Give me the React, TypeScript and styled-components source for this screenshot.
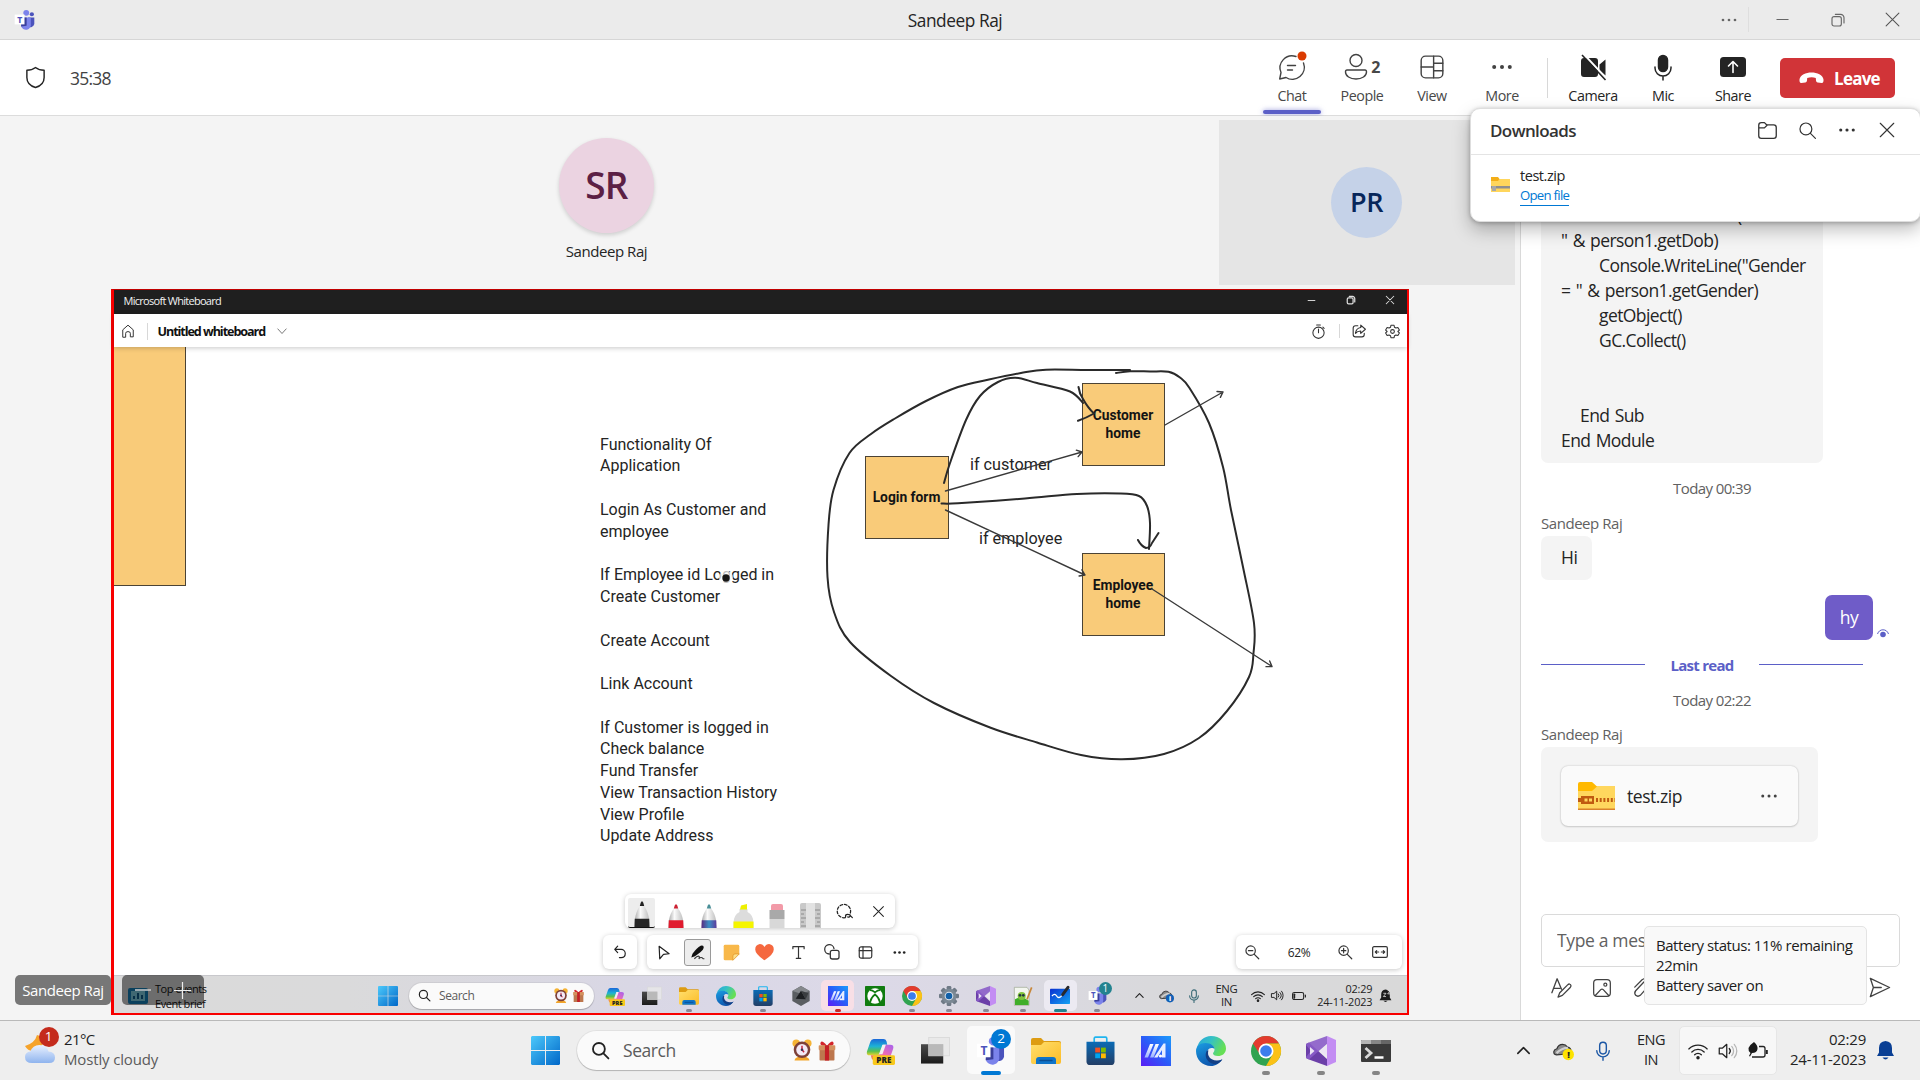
import React from 'react';
import styled, { createGlobalStyle, css } from 'styled-components';

const ui = '"Open Sans", "Noto Sans", sans-serif';
const board = 'Roboto, "Liberation Sans", sans-serif';

const GlobalStyle = createGlobalStyle`
  * { box-sizing: border-box; }
  body { margin: 0; background: #f4f4f4; overflow: hidden; }
  svg { display: block; flex: none; overflow: visible; }
`;

/* ---------- shared ---------- */

const Screen = styled.div`
  position: relative;
  width: 1920px;
  height: 1080px;
  overflow: hidden;
  display: flex;
  flex-direction: column;
  background: #f4f4f4;
  color: #242424;
  font-family: ${ui};
  font-size: 15px;
  letter-spacing: -0.03em;
  white-space: nowrap;
`;

const Cell = styled.div<{ $w: number }>`
  position: relative;
  width: ${p => p.$w}px;
  height: 100%;
  flex: none;
  display: flex;
  align-items: center;
  justify-content: center;
`;

const Rule = styled.i<{ $h: number; $m?: string; $c?: string }>`
  width: 1px;
  height: ${p => p.$h}px;
  margin: ${p => p.$m ?? '0'};
  background: ${p => p.$c ?? '#d8d8d8'};
  flex: none;
`;

const Spacer = styled.span`
  flex: 1;
`;

type IconProps = { s?: number; c?: string; w?: number };
const Line = ({ s = 20, c = '#424242', w = 1.4, children }: IconProps & { children: React.ReactNode }) => (
  <svg width={s} height={s} viewBox="0 0 24 24" fill="none" stroke={c} strokeWidth={w} strokeLinecap="round" strokeLinejoin="round">
    {children}
  </svg>
);

const Dots = ({ c = '#424242', gap = 6.5, r = 1.4, ...p }: IconProps & { gap?: number; r?: number }) => (
  <Line {...p} c="none"><g fill={c}><circle cx={12 - gap} cy="12" r={r} /><circle cx="12" cy="12" r={r} /><circle cx={12 + gap} cy="12" r={r} /></g></Line>
);
const Minus = (p: IconProps) => <Line {...p}><path d="M3 12h18" /></Line>;
const Cross = (p: IconProps) => <Line {...p}><path d="M3 3l18 18M21 3L3 21" /></Line>;
const Restore = (p: IconProps) => <Line {...p}><rect x="3" y="7" width="14" height="14" rx="3" /><path d="M8 3.5h8a5 5 0 0 1 5 5v8" /></Line>;
const Search = (p: IconProps) => <Line {...p}><circle cx="10" cy="10" r="7.5" /><path d="M15.7 15.7L22 22" /></Line>;
const ChevronUp = (p: IconProps) => <Line {...p}><path d="M4 16l8-8 8 8" /></Line>;
const Mic = (p: IconProps) => <Line {...p}><rect x="8" y="1.5" width="8" height="14" rx="4" /><path d="M4.5 11.5a7.5 7.5 0 0 0 15 0M12 19v4" /></Line>;
const Wifi = (p: IconProps) => <Line {...p}><path d="M1 9.5a15.5 15.5 0 0 1 22 0M4.6 13.2a10.5 10.5 0 0 1 14.8 0M8 16.6a5.6 5.6 0 0 1 8 0" /><circle cx="12" cy="20" r="1.3" fill={p.c} /></Line>;
const Volume = ({ dim, ...p }: IconProps & { dim?: string }) => (
  <Line {...p}><path d="M1.5 8.5h4l5-4.5v16l-5-4.5h-4z" /><path d="M13.5 9a4.5 4.5 0 0 1 0 6" /><path d="M16.5 6.5a8 8 0 0 1 0 11M19.5 4a12 12 0 0 1 0 16" stroke={dim ?? p.c} /></Line>
);

const TeamsLogo = ({ s = 30 }: IconProps) => (
  <svg width={s} height={s} viewBox="0 0 30 30">
    <circle cx="25.5" cy="7.5" r="3" fill="#4b53bc" />
    <circle cx="17.5" cy="5.5" r="4.2" fill="#7b83eb" />
    <path d="M20 12h9v9.500a5.500 5.500 0 0 1-9 3z" fill="#4b53bc" />
    <path d="M10 12h14v9a7 7 0 0 1-14 3z" fill="#7b83eb" />
    <path d="M12 12h6v12l-8 1z" fill="#3a3f9b" />
    <rect x="1" y="8" width="14" height="14" fill="#fff" />
    <text x="8" y="19.5" textAnchor="middle" fontFamily="Open Sans" fontWeight="700" fontSize="12.5" fill="#4b53bc">T</text>
  </svg>
);

/* ---------- taskbar artwork ---------- */

const WindowsLogo = ({ s = 30 }: IconProps) => (
  <svg width={s} height={s} viewBox="0 0 30 30">
    <defs><linearGradient id="win" gradientUnits="userSpaceOnUse" x1="0" y1="0" x2="30" y2="30"><stop offset="0" stopColor="#4cc9fb" /><stop offset="1" stopColor="#0067c8" /></linearGradient></defs>
    <path fill="url(#win)" d="M1 0h13.500v14.500H0V1zM15.500 0H29l1 1v13.500H15.500zM0 15.500h14.500V30H1l-1-1zM15.500 15.500H30V29l-1 1H15.500z" />
  </svg>
);
const CopilotIcon = ({ s = 30 }: IconProps) => (
  <svg width={s} height={s} viewBox="0 0 30 30">
    <defs>
      <linearGradient id="cpa" x1="0" y1="0" x2="0" y2="1"><stop offset="0" stopColor="#1a66d8" /><stop offset=".45" stopColor="#1cb2d6" /><stop offset=".75" stopColor="#58c04e" /><stop offset="1" stopColor="#e9d22e" /></linearGradient>
      <linearGradient id="cpb" x1="1" y1="0" x2="0" y2="1"><stop offset="0" stopColor="#a562ef" /><stop offset=".5" stopColor="#ee6bb5" /><stop offset="1" stopColor="#f7862f" /></linearGradient>
    </defs>
    <path fill="url(#cpa)" d="M8 3h10q2.500 0 3.200 2.500L22 9h-5l-4 11H4q-4 0-3-4L4.500 6Q5.500 3 8 3z" />
    <path fill="url(#cpb)" d="M19 9h6q4.500 0 3 4.500l-3 8.500Q24 25 21 25H9q-3 0-3.500-3L5 20h6q3 0 4-3z" />
    <path d="M17.500 9h3l-3.500 10h-3z" fill="#f2f2f2" />
    <rect x="7" y="20" width="23" height="10" rx="1.5" fill="#f8c81c" />
    <text x="18.5" y="28" textAnchor="middle" fontFamily="Open Sans" fontWeight="800" fontSize="8.3" letterSpacing="0.2" fill="#222">PRE</text>
  </svg>
);
const TaskViewIcon = ({ s = 30 }: IconProps) => (
  <svg width={s} height={s} viewBox="0 0 30 30">
    <defs><linearGradient id="tvb" x1="0" y1="0" x2="0" y2="1"><stop offset="0" stopColor="#4a4a4a" /><stop offset="1" stopColor="#1c1c1c" /></linearGradient></defs>
    <rect x="0" y="8.5" width="23" height="20" fill="url(#tvb)" />
    <rect x="8" y="1.5" width="21.5" height="19" fill="#e8e8e8" fillOpacity=".82" stroke="#d6d6d6" strokeWidth=".8" />
    <rect x="8" y="8.5" width="15" height="12" fill="#b9b9b9" />
  </svg>
);
const FolderIcon = ({ s = 30 }: IconProps) => (
  <svg width={s} height={s} viewBox="0 0 30 30">
    <defs><linearGradient id="fld" x1="0" y1="0" x2="1" y2="1"><stop offset="0" stopColor="#ffdf6e" /><stop offset="1" stopColor="#fcbc26" /></linearGradient></defs>
    <path d="M0 4q0-2 2-2h8l3 3h15q2 0 2 2v5H0z" fill="#dd9c12" />
    <path d="M0 9h10l3-3h15q2 0 2 2v18q0 2-2 2H2q-2 0-2-2z" fill="url(#fld)" />
    <path d="M5 28v-4q0-3 3-3h14q3 0 3 3v4z" fill="#0f74c9" />
    <path d="M9 24.500h12" stroke="#0a4e93" strokeWidth="1.3" strokeLinecap="round" />
  </svg>
);
const StoreIcon = ({ s = 30 }: IconProps) => (
  <svg width={s} height={s} viewBox="0 0 30 30">
    <defs><linearGradient id="sto" x1="0" y1="0" x2="0" y2="1"><stop offset="0" stopColor="#0b6bb5" /><stop offset="1" stopColor="#233e66" /></linearGradient></defs>
    <path d="M8.500 7V2.500q0-1.300 1.300-1.300h10.400q1.300 0 1.300 1.300V7" fill="none" stroke="#20b5ef" strokeWidth="1.7" />
    <path d="M.5 6h29v20q0 4-4 4h-21q-4 0-4-4z" fill="url(#sto)" />
    <path d="M9.500 12h5v5h-5z" fill="#f25022" /><path d="M15.500 12h5v5h-5z" fill="#7fba00" /><path d="M9.500 18h5v5h-5z" fill="#00a4ef" /><path d="M15.500 18h5v5h-5z" fill="#ffb900" />
  </svg>
);
const AsusIcon = ({ s = 30 }: IconProps) => (
  <svg width={s} height={s} viewBox="0 0 30 30">
    <defs>
      <linearGradient id="asu" x1="0" y1="1" x2="1" y2="0"><stop offset="0" stopColor="#5a1cf5" /><stop offset=".5" stopColor="#2b5cf8" /><stop offset="1" stopColor="#1c9bfb" /></linearGradient>
      <linearGradient id="asl" x1="0" y1="0" x2="0" y2="1"><stop offset="0" stopColor="#fff" /><stop offset="1" stopColor="#9db4ff" /></linearGradient>
    </defs>
    <rect width="30" height="30" fill="url(#asu)" />
    <path d="M9 8h3.500L7 21.500H3.500zM14.500 8H18l-5.500 13.500H9z" fill="url(#asl)" />
    <path d="M22.500 7.500h2v14H21V14l-4.500 7.500h-3.500z" fill="#e6edff" /><circle cx="19.500" cy="20" r="1.6" fill="#fff" />
  </svg>
);
const EdgeIcon = ({ s = 30 }: IconProps) => (
  <svg width={s} height={s} viewBox="0 0 30 30">
    <defs>
      <linearGradient id="eda" x1="0" y1="0" x2="1" y2=".4"><stop offset="0" stopColor="#28a5dd" /><stop offset=".5" stopColor="#35c1c4" /><stop offset="1" stopColor="#66df55" /></linearGradient>
      <linearGradient id="edb" x1="0" y1="0" x2=".5" y2="1"><stop offset="0" stopColor="#1b9de2" /><stop offset="1" stopColor="#0d55ad" /></linearGradient>
    </defs>
    <path d="M1 12A14.500 14.500 0 0 1 15 0c9 0 15 6 15 12.500 0 5-4 7.500-8 7.500-3.500 0-5-1.500-5-2.500s1.500-1.700 1.500-4C18.500 10 15 8 11 8 6 8 2 10 1 12z" fill="url(#eda)" />
    <path d="M0 15c0-5 4-8 9.500-8 5.500 0 9 3 9 6-1-1-3.500-1.500-5-.5-2.500 1.500-3.500 5-2 8.500 2 4.500 8.500 6 14.500 2.500C23.500 27.500 19.500 30 15 30 6.500 30 0 23.500 0 15z" fill="url(#edb)" />
    <path d="M11 14.500c-3 4.500-1 11.500 6.500 13.500 4 .8 7.500-2.500 9-4.800-5 2.500-12 1.300-13.800-3.200-1-2.200-.7-4.300-.2-5.500z" fill="#123f86" />
  </svg>
);
const ChromeIcon = ({ s = 30 }: IconProps) => (
  <svg width={s} height={s} viewBox="0 0 30 30">
    <circle cx="15" cy="15" r="15" fill="#30a350" />
    <path d="M2 7.500A15 15 0 0 1 28 7.500H15L9 18.500z" fill="#e33b2e" />
    <path d="M28 7.500A15 15 0 0 1 15 30l6.500-11.500L15 7.500z" fill="#fbc116" />
    <circle cx="15" cy="15" r="7.5" fill="#fff" /><circle cx="15" cy="15" r="5.8" fill="#3b7ded" />
  </svg>
);
const VisualStudioIcon = ({ s = 30 }: IconProps) => (
  <svg width={s} height={s} viewBox="0 0 30 30">
    <path d="M0 8l3-1.500L22 24l-1 6L3 23.500 0 22z" fill="#6b3fa8" />
    <path d="M0 22l3 1.500L22 7l-1-7L3 6.500 0 8v1l5 6-5 6z" fill="#8a5cc8" opacity=".9" />
    <path d="M21 0l9 4v22l-9 4z" fill="#c38df3" />
    <path d="M4 11v8l4.500-4z" fill="#ece5f5" /><path d="M21 9.500v11L14 15z" fill="#ece5f5" />
  </svg>
);
const TerminalIcon = ({ s = 30 }: IconProps) => (
  <svg width={s} height={s} viewBox="0 0 30 30">
    <rect y="4" width="30" height="22" rx="1" fill="#3a3a3a" />
    <path d="M0 5q0-1 1-1h9v4H0z" fill="#b5b5b5" /><path d="M10 4h10v4H10z" fill="#868686" /><path d="M20 4h9q1 0 1 1v3H20z" fill="#666" />
    <path d="M4.500 12l5.500 5-5.500 5" fill="none" stroke="#d9d9d9" strokeWidth="2.8" /><path d="M13.500 21.500h9" stroke="#fff" strokeWidth="2.5" />
  </svg>
);
const HexIcon = ({ s = 20 }: IconProps) => (
  <svg width={s} height={s} viewBox="0 0 30 30">
    <path d="M15 0l13 7.500v15L15 30 2 22.500v-15z" fill="#5a5d61" /><path d="M15 0l13 7.500-13 4L2 7.500z" fill="#85888c" /><path d="M15 7l7 13-15-1z" fill="#1d1f22" /><path d="M15 7l7 13 4-9z" fill="#3a3d40" />
  </svg>
);
const XboxIcon = ({ s = 20 }: IconProps) => (
  <svg width={s} height={s} viewBox="0 0 30 30">
    <rect width="30" height="30" rx="1" fill="#107c10" /><circle cx="15" cy="15" r="11.5" fill="#fff" />
    <path d="M7.500 24.500C8.500 19 12.500 14.500 15 12.500c2.500 2 6.500 6.500 7.500 12M7 6.500c3-1 6 1.500 8 3 2-1.500 5-4 8-3" fill="none" stroke="#107c10" strokeWidth="2.6" />
  </svg>
);
const SettingsIcon = ({ s = 20 }: IconProps) => (
  <svg width={s} height={s} viewBox="0 0 30 30">
    {[0, 45, 90, 135].map(a => <rect key={a} x="11.5" y="0" width="7" height="30" rx="2" fill="#6f7a86" transform={`rotate(${a} 15 15)`} />)}
    <circle cx="15" cy="15" r="11" fill="#7b8894" /><circle cx="15" cy="15" r="6.5" fill="#dfe6ee" /><circle cx="15" cy="15" r="5" fill="#1260a8" />
  </svg>
);
const NotepadIcon = ({ s = 20 }: IconProps) => (
  <svg width={s} height={s} viewBox="0 0 30 30">
    <path d="M2 2h19l3 4v23H2z" fill="#f3f6ef" stroke="#9aa58e" /><path d="M3 20q10-6 20.500 2v6.500H3z" fill="#3fae2a" /><path d="M7 15q0-6 6-6t6 6-6 6-6-6z" fill="#82c43c" /><circle cx="10.500" cy="14" r="2" fill="#234" /><circle cx="15.500" cy="14" r="2" fill="#234" />
    <path d="M28 2l-7 18" stroke="#c8873a" strokeWidth="2.5" />
  </svg>
);
const WhiteboardIcon = ({ s = 20 }: IconProps) => (
  <svg width={s} height={s} viewBox="0 0 30 30">
    <defs><linearGradient id="wbd" x1="0" y1="0" x2="1" y2="1"><stop offset="0" stopColor="#0a2fd0" /><stop offset="1" stopColor="#12a3f3" /></linearGradient></defs>
    <rect y="4" width="30" height="23" rx="1" fill="url(#wbd)" /><path d="M3 15q4-5 7 0t8-1" fill="none" stroke="#fff" strokeWidth="2" /><path d="M27 2l-8 11" stroke="#28282c" strokeWidth="4.5" strokeLinecap="round" />
  </svg>
);
const AlarmIcon = ({ s = 22 }: IconProps) => (
  <svg width={s} height={s * 1.12} viewBox="0 0 24 27">
    <circle cx="5" cy="5" r="4.5" fill="#f5b335" /><circle cx="19" cy="5" r="4.5" fill="#f5b335" /><path d="M3 26q0-3 5-5h8q5 2 5 5z" fill="#f2a52b" />
    <circle cx="12" cy="13" r="10" fill="#7d4038" /><circle cx="12" cy="13" r="7" fill="#f2e9f6" /><path d="M12 8v5l2.500 3" fill="none" stroke="#c9263f" strokeWidth="1.8" /><circle cx="12" cy="13" r="1.6" fill="#3c3350" />
  </svg>
);
const GiftIcon = ({ s = 22 }: IconProps) => (
  <svg width={s} height={s * 1.12} viewBox="0 0 24 27">
    <path d="M12 8Q5 0 4 5q0 4 8 3 8 1 8-3-1-5-8 3z" fill="#d3252b" /><rect x="3" y="12" width="18" height="14" rx="1" fill="#bd774e" /><rect x="2" y="7.5" width="20" height="6" rx="1" fill="#d4915f" /><rect x="9.5" y="7.5" width="5" height="18.5" fill="#c41f26" />
  </svg>
);
const CloudIcon = ({ s = 22, badge, mark, ink }: IconProps & { badge: string; mark: string; ink: string }) => (
  <svg width={s} height={s} viewBox="0 0 24 24">
    <path d="M4 17q-3.500-.5-3-4 .6-2.600 3.500-3Q6 5 11 5q3.500 0 5.500 3 3 0 4 3.500L16 16z" fill="#8a8a8a" stroke="#333" strokeWidth="1.4" /><path d="M4 15q6-6 13-6" stroke="#d0d0d0" strokeWidth="2.5" fill="none" />
    <circle cx="17.5" cy="16.5" r="6.5" fill={badge} />
    <text x="17.5" y="20.5" textAnchor="middle" fontFamily="Open Sans" fontWeight="800" fontSize="10.5" fill={ink}>{mark}</text>
  </svg>
);

/* ---------- window title ---------- */

const TitleBar = styled.header`
  height: 40px;
  flex: none;
  display: flex;
  align-items: center;
  background: #ebebeb;
  border-bottom: 1px solid #d6d6d6;
`;
const TitleSide = styled.div<{ $w: number; $pad?: number }>`
  width: ${p => p.$w}px;
  height: 100%;
  padding-left: ${p => p.$pad ?? 0}px;
  display: flex;
  align-items: center;
`;
const WindowTitle = styled.h1`
  flex: 1;
  margin: 0;
  padding-top: 1px;
  text-align: center;
  font-size: 17.300px;
  font-weight: 400;
`;

/* ---------- call controls ---------- */

const CallBar = styled.div`
  height: 76px;
  flex: none;
  display: flex;
  align-items: center;
  padding: 0 25px 0 24px;
  background: #fff;
  border-bottom: 1px solid #dcdcdc;
`;
const Timer = styled.span`
  margin-left: 23px;
  flex: 1;
  font-size: 17.5px;
  letter-spacing: -0.045em;
  color: #424242;
`;
const ControlButton = styled.div<{ $dark?: boolean }>`
  position: relative;
  width: 70px;
  height: 100%;
  padding-top: 12px;
  display: flex;
  flex-direction: column;
  align-items: center;
  color: ${p => (p.$dark ? '#242424' : '#484848')};
`;
const ControlIcon = styled.div`
  position: relative;
  height: 30px;
  display: flex;
  align-items: center;
  gap: 3px;
  font-size: 16px;
  font-weight: 700;
`;
const ControlLabel = styled.span`
  margin-top: 4px;
  line-height: 20px;
  font-size: 14.300px;
`;
const ActiveMark = styled.i`
  position: absolute;
  left: 6px;
  bottom: 1px;
  width: 58px;
  height: 4px;
  border-radius: 2px;
  background: #5b5fc7;
  box-shadow: 0 0 5px rgba(91, 95, 199, 0.6);
`;
const LeaveButton = styled.button`
  width: 115px;
  height: 40px;
  margin-left: 12px;
  padding: 1px 0 0 4px;
  display: flex;
  align-items: center;
  justify-content: center;
  gap: 10px;
  border: 0;
  border-radius: 5px;
  background: #d13438;
  color: #fff;
  font: 700 17px ${ui};
  letter-spacing: -0.045em;
`;

function CallControls() {
  return (
    <CallBar>
      <Line s={23} c="#242424" w={1.5}><path d="M12 1.500c2.500 2 5.500 3 9 3V12c0 5.500-4 9-9 10.500C7 21 3 17.500 3 12V4.500c3.500 0 6.500-1 9-3z" /></Line>
      <Timer>35:38</Timer>
      <ControlButton>
        <ControlIcon>
          <svg width="28" height="30" viewBox="0 0 28 30" fill="none" stroke="#424242" strokeWidth="1.4" strokeLinecap="round" strokeLinejoin="round">
            <path d="M18 4.500A12 12 0 0 0 3 20.500L1.700 27l6.300-1.500A12 12 0 0 0 25.500 11M9.500 13.500h8M9.500 18h5" /><circle cx="24" cy="4" r="4.5" fill="#da3b01" stroke="none" />
          </svg>
        </ControlIcon>
        <ControlLabel>Chat</ControlLabel><ActiveMark />
      </ControlButton>
      <ControlButton>
        <ControlIcon>
          <svg width="24" height="28" viewBox="0 0 24 28" fill="none" stroke="#424242" strokeWidth="1.4"><circle cx="12" cy="7.5" r="6" /><path d="M3 17h18q1.500 0 1.500 2c0 4-4.500 7-10.500 7S1.500 23 1.500 19q0-2 1.500-2z" /></svg>
          2
        </ControlIcon>
        <ControlLabel>People</ControlLabel>
      </ControlButton>
      <ControlButton>
        <ControlIcon><Line s={26} w={1.3}><rect x="2" y="2" width="20" height="20" rx="4" /><path d="M13.500 2v20M2 12h11.500M13.500 8.500H22M13.500 15.500H22" /></Line></ControlIcon>
        <ControlLabel>View</ControlLabel>
      </ControlButton>
      <ControlButton><ControlIcon><Dots s={26} gap={7.2} r={1.85} /></ControlIcon><ControlLabel>More</ControlLabel></ControlButton>
      <Rule $h={40} $m="0 10px" />
      <ControlButton $dark>
        <ControlIcon>
          <svg width="27" height="27" viewBox="0 0 27 27"><path d="M4 4h11q3 0 3 3v13q0 3-3 3H4q-3 0-3-3V7q0-3 3-3zM19.500 10.500l6-5v16l-6-5z" fill="#242424" /><path d="M3.500 0l23 24.500" stroke="#fff" strokeWidth="2" /><path d="M2 1l23.500 25" stroke="#242424" strokeWidth="1.6" /></svg>
        </ControlIcon>
        <ControlLabel>Camera</ControlLabel>
      </ControlButton>
      <ControlButton $dark>
        <ControlIcon><svg width="20" height="27" viewBox="0 0 20 27" fill="none" stroke="#242424" strokeWidth="1.5" strokeLinecap="round"><rect x="5.5" y="1.5" width="9" height="16" rx="4.5" fill="#242424" /><path d="M2 13v1a8 8 0 0 0 16 0v-1M10 22v4" /></svg></ControlIcon>
        <ControlLabel>Mic</ControlLabel>
      </ControlButton>
      <ControlButton $dark>
        <ControlIcon><svg width="26" height="20" viewBox="0 0 26 20"><rect width="26" height="20" rx="3.5" fill="#242424" /><path d="M13 15.500V4.500M8.500 9L13 4.500 17.500 9" fill="none" stroke="#fff" strokeWidth="1.6" strokeLinecap="round" strokeLinejoin="round" /></svg></ControlIcon>
        <ControlLabel>Share</ControlLabel>
      </ControlButton>
      <LeaveButton>
        <svg width="25" height="12" viewBox="0 0 25 12"><path d="M12.500.500C18 .5 24 3 24.500 7.500c.2 2.300-.5 3.800-1.800 3.600l-4-.6c-1-.2-1.600-1-1.700-2L16.800 6q-4-1.300-8.600 0L8 8.500c-.1 1-.7 1.800-1.700 2l-4 .6C1 11.300.3 9.800.5 7.500 1 3 7 .5 12.500.5z" fill="#fff" /></svg>
        Leave
      </LeaveButton>
    </CallBar>
  );
}

/* ---------- stage ---------- */

const Body = styled.div`
  height: 904px;
  flex: none;
  display: flex;
`;
const Stage = styled.main`
  position: relative;
  width: 1520px;
  display: flex;
  flex-direction: column;
  background: #f4f4f4;
`;
const Participants = styled.div`
  height: 173px;
  display: flex;
  align-items: flex-start;
`;
const Presenter = styled.div`
  width: 1213px;
  padding-top: 22px;
  display: flex;
  flex-direction: column;
  align-items: center;
  line-height: 20px;
`;
const Avatar = styled.div<{ $size: number; $bg: string; $fg: string; $font: number }>`
  width: ${p => p.$size}px;
  height: ${p => p.$size}px;
  padding-bottom: 2px;
  border-radius: 50%;
  display: flex;
  align-items: center;
  justify-content: center;
  background: ${p => p.$bg};
  color: ${p => p.$fg};
  font-size: ${p => p.$font}px;
  font-weight: 600;
  letter-spacing: -0.02em;
`;
const PresenterAvatar = styled(Avatar)`
  margin-bottom: 8px;
  box-shadow: 0 2px 4px rgba(0, 0, 0, 0.16);
`;
const SelfTile = styled.div`
  width: 296px;
  height: 165px;
  margin: 4px 0 0 6px;
  padding-right: 1px;
  display: flex;
  align-items: center;
  justify-content: center;
  background: #e5e5e5;
`;
const NameTag = styled.div`
  position: absolute;
  left: 15px;
  top: 859px;
  width: 96px;
  height: 30px;
  border-radius: 5px;
  background: #777;
  color: #fff;
  line-height: 30px;
  text-align: center;
`;
const ZoomTag = styled.div`
  position: absolute;
  left: 122px;
  top: 859px;
  width: 82px;
  height: 30px;
  padding-left: 13px;
  border-radius: 5px;
  display: flex;
  align-items: center;
  gap: 23px;
  background: rgba(0, 0, 0, 0.5);
`;

/* ---------- shared whiteboard ---------- */

const ShareFrame = styled.section`
  width: 1298px;
  height: 726px;
  margin-left: 111px;
  display: flex;
  flex-direction: column;
  border: solid #f80000;
  border-width: 1px 2px 2px 3px;
  border-top-color: #c00000;
  background: #fff;
`;
const BoardTitle = styled.div`
  height: 24px;
  flex: none;
  padding: 0 0 4px 9.500px;
  display: flex;
  align-items: center;
  background: #1f1f1f;
  color: #f2f2f2;
  font-size: 11px;
  letter-spacing: -0.065em;
`;
const BoardHeader = styled.div`
  position: relative;
  z-index: 1;
  height: 33px;
  flex: none;
  padding: 1px 0 0 5px;
  display: flex;
  align-items: center;
  background: #fff;
  box-shadow: 0 1px 5px rgba(0, 0, 0, 0.22);
  font-size: 12.600px;
  font-weight: 700;
  letter-spacing: -0.085em;
  color: #111;
`;
const BoardName = styled.span`
  width: 119px;
  margin-left: 9.500px;
`;
const Canvas = styled.div`
  position: relative;
  height: 628px;
  flex: none;
  overflow: hidden;
  font-family: ${board};
  letter-spacing: 0;
  color: #242424;
`;
const Sticky = styled.div<{ $x: number; $y: number; $w: number; $h: number }>`
  position: absolute;
  left: ${p => p.$x - 114}px;
  top: ${p => p.$y - 347}px;
  width: ${p => p.$w}px;
  height: ${p => p.$h}px;
  padding-right: 1px;
  display: flex;
  align-items: center;
  justify-content: center;
  border: 1px solid #4b4335;
  background: #f9cb79;
  color: #141414;
  text-align: center;
  white-space: pre-line;
  font-size: 13.800px;
  font-weight: 700;
  line-height: 17.500px;
`;
const Note = styled.div<{ $x: number; $y: number; $size?: number }>`
  position: absolute;
  left: ${p => p.$x - 114}px;
  top: ${p => p.$y - 347}px;
  white-space: pre;
  font-size: ${p => p.$size ?? 16}px;
  line-height: 21.770px;
`;
const Ink = styled.svg`
  position: absolute;
  inset: 0;
`;

const floating = css`
  position: absolute;
  height: 34px;
  display: flex;
  align-items: center;
  border-radius: 6px;
  background: #fff;
  box-shadow: 0 1px 5px rgba(0, 0, 0, 0.22);
`;
const FloatBar = styled.div<{ $x: number; $y: number; $w: number }>`
  ${floating}
  left: ${p => p.$x - 114}px;
  top: ${p => p.$y - 347}px;
  width: ${p => p.$w}px;
  font-family: ${ui};
  font-size: 12px;
  letter-spacing: -0.03em;
`;
const PenSlot = styled.div<{ $on?: boolean }>`
  width: 27px;
  height: 30px;
  margin: 4px 3.400px 0;
  flex: none;
  display: flex;
  align-items: flex-end;
  justify-content: center;
  border-radius: 2px;
  background: ${p => (p.$on ? '#ededed' : 'transparent')};
  border-bottom: ${p => (p.$on ? '1px solid #111' : '0')};
`;
const ToolSlot = styled.div<{ $on?: boolean }>`
  width: 27px;
  height: 27px;
  margin: 0 3.350px;
  flex: none;
  display: flex;
  align-items: center;
  justify-content: center;
  border: 1px solid ${p => (p.$on ? '#9a9a9a' : 'transparent')};
  border-radius: 3px;
  background: ${p => (p.$on ? '#ededed' : 'transparent')};
`;

const Pen = ({ h = 24, tip, band }: { h?: number; tip: string; band: string }) => (
  <svg width="16" height={h} viewBox="0 0 16 25" preserveAspectRatio="none">
    <defs>
      <linearGradient id="pen" x1="0" x2="1"><stop offset="0" stopColor="#a9a9a9" /><stop offset=".4" stopColor="#fafafa" /><stop offset="1" stopColor="#bdbdbd" /></linearGradient>
      <linearGradient id="galaxy" x1="0" x2="1"><stop offset="0" stopColor="#5a2a80" /><stop offset=".5" stopColor="#3b8fc4" /><stop offset="1" stopColor="#5b3a9c" /></linearGradient>
    </defs>
    <path d="M6 4.500Q2 10 .8 17.500L.5 25h15l-.3-7.500Q14 10 10 4.500z" fill="url(#pen)" />
    <path d="M8 0q1.500 1 2.200 4.700H5.800Q6.500 1 8 0z" fill={tip} />
    <path d="M.8 17h14.400l.3 8H.5z" fill={band} />
  </svg>
);

/* Smooth curve through a list of points. */
function smooth(pts: number[][]) {
  const n = pts.length;
  const at = (i: number) => pts[Math.max(0, Math.min(n - 1, i))];
  let d = `M${pts[0][0]} ${pts[0][1]}`;
  for (let i = 0; i < n - 1; i++) {
    const [a, b, c, e] = [at(i - 1), at(i), at(i + 1), at(i + 2)];
    d += `C${b[0] + (c[0] - a[0]) / 6} ${b[1] + (c[1] - a[1]) / 6} ${c[0] - (e[0] - b[0]) / 6} ${c[1] - (e[1] - b[1]) / 6} ${c[0]} ${c[1]}`;
  }
  return d;
}
const loop = smooth([
  [1130, 370], [1088, 370], [1046, 369.7], [1021, 373], [989, 379.500], [958, 387], [926, 401], [895, 418.500], [871, 434], [849.500, 453],
  [833.500, 490], [828.500, 525], [827.500, 577], [834, 612], [850, 642], [891, 676], [934, 703], [990, 727.500], [1037, 742.500], [1081, 755],
  [1122, 759.300], [1164, 754], [1199, 738], [1227, 711], [1249, 677], [1253.500, 653], [1254, 623], [1243, 567], [1231, 510], [1223, 467],
  [1209, 423], [1189.500, 388], [1180, 377.500], [1168.500, 371.800], [1150, 371.500], [1130, 371.300], [1116, 373],
]);
const toCustomer = smooth([[944, 483], [950, 463], [966, 420], [980, 396], [998, 382], [1015.500, 377.800], [1037, 383], [1070, 391.500], [1083, 403]]);
const toEmployee = smooth([[941.500, 503.500], [958, 503.300], [1025, 498.500], [1077, 494], [1120, 493.500], [1139, 496], [1147, 506], [1150, 523], [1149, 549]]);

const Arrow = ({ from, to }: { from: [number, number]; to: [number, number] }) => {
  const a = Math.atan2(to[1] - from[1], to[0] - from[0]);
  const wing = (k: number) => `${to[0] - 6 * Math.cos(a + k)} ${to[1] - 6 * Math.sin(a + k)}`;
  return <path d={`M${from[0]} ${from[1]}L${to[0]} ${to[1]}M${wing(0.6)}L${to[0]} ${to[1]}L${wing(-0.6)}`} strokeWidth="1.4" stroke="#3a3a3a" />;
};

const boardText = `Functionality Of
Application

Login As Customer and
employee

If Employee id Logged in
Create Customer

Create Account

Link Account

If Customer is logged in
Check balance
Fund Transfer
View Transaction History
View Profile
Update Address`;

function Whiteboard() {
  return (
    <Canvas>
      <Sticky $x={113} $y={340} $w={73} $h={246} />
      <Note $x={600} $y={433.7}>{boardText}</Note>
      <Sticky $x={865} $y={456} $w={84} $h={83}>Login form</Sticky>
      <Sticky $x={1082} $y={383} $w={83} $h={83}>{'Customer\nhome'}</Sticky>
      <Sticky $x={1082} $y={553} $w={83} $h={83}>{'Employee\nhome'}</Sticky>
      <Note $x={970} $y={453.7} $size={16.2}>if customer</Note>
      <Note $x={979} $y={527.7} $size={16.2}>if employee</Note>
      <Ink width="1293" height="628" viewBox="114 347 1293 628" fill="none" stroke="#2a2a2a" strokeWidth="2" strokeLinecap="round" strokeLinejoin="round">
        <path d={loop} /><path d={toCustomer} /><path d={toEmployee} />
        <path d="M1078.500 387q1 7 4.500 12 5 9 11 14.500-7 4-16 7.300M1138 540q3 6 8 8 4 0 6-5l6.500-10" />
        <Arrow from={[945.5, 491]} to={[1082, 452]} /><Arrow from={[945.5, 510]} to={[1085, 575]} />
        <Arrow from={[1165, 425]} to={[1223, 392]} /><Arrow from={[1152, 589]} to={[1272, 666.5]} />
        <circle cx="726" cy="577.5" r="7" fill="#fff" fillOpacity=".7" stroke="none" /><circle cx="726" cy="578" r="3.7" fill="#161616" stroke="none" />
      </Ink>

      <FloatBar $x={625} $y={894} $w={270}>
        <PenSlot $on><Pen h={26} tip="#222" band="#262626" /></PenSlot>
        <PenSlot><Pen tip="#cc2233" band="#e01b2e" /></PenSlot>
        <PenSlot><Pen tip="#4a8f98" band="url(#galaxy)" /></PenSlot>
        <PenSlot><svg width="21" height="24" viewBox="0 0 21 24"><path d="M.5 24v-5q0-8 6-11V5h8v3q6 3 6 11v5z" fill="#dcdcdc" /><path d="M7 5.500l1-4L14 0v5.500z" fill="#eef000" /><path d="M.5 17.500h20V24H.5z" fill="#f5f500" /></svg></PenSlot>
        <PenSlot><svg width="16" height="24" viewBox="0 0 16 24"><path d="M2 7V2q0-2 2-2h8q2 0 2 2v5z" fill="#f29aa8" /><path d="M.5 6h15v9H.5z" fill="#a9a9a9" /><path d="M.5 15h15v9H.5z" fill="#d8d8d8" /></svg></PenSlot>
        <PenSlot><svg width="21" height="25" viewBox="0 0 21 25"><path d="M0 25V2q0-2 2-2h17q2 0 2 2v23z" fill="#c9c9c9" /><path d="M6 0h9v25H6z" fill="#e2e2e2" /><path d="M1 7h5M1 11h3M1 15h5M1 19h3M1 23h5M20 7h-5M20 11h-3M20 15h-5M20 19h-3M20 23h-5" stroke="#8a8a8a" strokeWidth="1" /></svg></PenSlot>
        <Cell $w={34}><Line s={16} c="#222" w={1.9}><path d="M20 15a10 10 0 1 0-6 6.500" strokeDasharray="4 2.800" /><path d="M13 21q-1-4 3-4t4 2q-1 3-4 2M20 19l3 3" /></Line></Cell>
        <Cell $w={33}><Cross s={13} c="#222" w={1.9} /></Cell>
      </FloatBar>

      <FloatBar $x={603} $y={935} $w={34}><Cell $w={33}><Line s={14} c="#222" w={2}><path d="M8 2L3 7.500 8 13M3.500 7.500H14a7 7 0 0 1 7 7c0 4-3 7-7 7h-3" /></Line></Cell></FloatBar>
      <FloatBar $x={647} $y={935} $w={271}>
        <ToolSlot><Line s={15} c="#222" w={1.9}><path d="M5 2l16 12-9 1-6 7z" /></Line></ToolSlot>
        <ToolSlot $on><svg width="15" height="15" viewBox="0 0 24 24"><path d="M17 1q4-1 5 2 0 4-6 9l-8 6-6 2 2-6q7-10 13-13z" fill="#111" /><path d="M7 22q5-5 7-4t0 4q4-4 7 0h2" fill="none" stroke="#333" strokeWidth="1.8" /></svg></ToolSlot>
        <ToolSlot><svg width="17" height="17" viewBox="0 0 24 24"><path d="M3 1h18q2 0 2 2v11l-9 9H3q-2 0-2-2V3q0-2 2-2z" fill="#f8b84a" /><path d="M14 23v-6q0-3 3-3h6z" fill="#fde08a" stroke="#e09226" /></svg></ToolSlot>
        <ToolSlot><svg width="19" height="17" viewBox="0 0 24 22"><path d="M12 21Q0 13 0 7 0 1 6 0q4 0 6 4 2-4 6-4 6 1 6 7 0 6-12 14z" fill="#f5683f" /></svg></ToolSlot>
        <ToolSlot><Line s={15} c="#333" w={1.9}><path d="M3 6V2.500h18V6M12 2.500v19M8.500 21.500h7" /></Line></ToolSlot>
        <ToolSlot><Line s={16} c="#333" w={1.9}><path d="M8 15A7 7 0 1 1 15 7" /><rect x="9.5" y="9.5" width="13" height="13" rx="3" /></Line></ToolSlot>
        <ToolSlot><Line s={15} c="#333" w={1.9}><rect x="2" y="3" width="20" height="18" rx="3" /><path d="M8 3v18M8 9h14M2 9h6" /></Line></ToolSlot>
        <ToolSlot><Dots s={15} c="#222" gap={7.5} r={2.1} /></ToolSlot>
      </FloatBar>
      <FloatBar $x={1236} $y={935} $w={166}>
        <Cell $w={33}><Line s={15} c="#333" w={1.9}><circle cx="9" cy="9" r="7.5" /><path d="M14.500 14.500L22 22M5.500 9h7" /></Line></Cell>
        <Cell $w={60}>62%</Cell>
        <Cell $w={32}><Line s={15} c="#333" w={1.9}><circle cx="9" cy="9" r="7.5" /><path d="M14.500 14.500L22 22M5.500 9h7M9 5.500v7" /></Line></Cell>
        <Cell $w={37}><Line s={16} c="#333" w={1.8}><rect x="1" y="4" width="22" height="16" rx="2" /><path d="M10 12H5M7 10l-2 2 2 2M14 12h5M17 10l2 2-2 2" /></Line></Cell>
      </FloatBar>
    </Canvas>
  );
}

/* ---------- taskbars ---------- */

const TaskCell = styled(Cell)<{ $hl?: string; $inset?: string }>`
  &::before {
    content: '';
    position: absolute;
    inset: ${p => p.$inset ?? '5px 4px 5px 4px'};
    border-radius: 5px;
    background: ${p => p.$hl ?? 'transparent'};
  }
  & > svg { position: relative; }
`;
const Running = styled.i<{ $w: number; $h: number; $b: number; $c?: string }>`
  position: absolute;
  bottom: ${p => p.$b}px;
  left: calc(50% - ${p => p.$w / 2}px);
  width: ${p => p.$w}px;
  height: ${p => p.$h}px;
  border-radius: 2px;
  background: ${p => p.$c ?? '#858585'};
`;
const Badge = styled.b<{ $s: number; $bg: string; $l: number; $t: number; $f: number }>`
  position: absolute;
  left: ${p => p.$l}px;
  top: ${p => p.$t}px;
  width: ${p => p.$s}px;
  height: ${p => p.$s}px;
  line-height: ${p => p.$s - 0.5}px;
  border-radius: 50%;
  background: ${p => p.$bg};
  color: #fff;
  text-align: center;
  font-size: ${p => p.$f}px;
  font-weight: 400;
`;
const InnerTaskbar = styled.div`
  height: 38px;
  flex: none;
  padding: 2px 0 0 14px;
  display: flex;
  align-items: center;
  border-top: 1px solid #c8c8cc;
  background: linear-gradient(90deg, #dadada 0, #dadadb 18%, #d9d7e5 40%, #dcd9e8 58%, #d9d9dc 80%, #d9d9d9 100%);
  color: #222;
  font-size: 11.300px;
`;
const EventWidget = styled.div`
  width: 241px;
  flex: none;
  display: flex;
  align-items: center;
  gap: 7px;
  line-height: 15px;
  font-size: 11px;
  color: #111;
`;
const SearchPill = styled.div<{ $w: number; $h: number; $pad: number; $gap: number; $font: number; $art: number }>`
  width: ${p => p.$w}px;
  height: ${p => p.$h}px;
  margin: 0 3px;
  padding: 0 ${p => p.$art}px 0 ${p => p.$pad}px;
  display: flex;
  align-items: center;
  gap: ${p => p.$gap}px;
  border-radius: 20px;
  background: #fafafa;
  box-shadow: 0 1px 1px rgba(0, 0, 0, 0.2), 0 0 0 1px rgba(0, 0, 0, 0.05);
  color: #5c5c5c;
  font-size: ${p => p.$font}px;
  line-height: 1;
  flex: none;
`;
const Art = styled.span<{ $gap: number }>`
  margin-left: auto;
  display: flex;
  gap: ${p => p.$gap}px;
`;
const Stack = styled.div<{ $w: number; $lh: number; $right?: boolean; $f: number; $up?: number }>`
  width: ${p => p.$w}px;
  flex: none;
  padding-bottom: ${p => p.$up ?? 0}px;
  line-height: ${p => p.$lh}px;
  font-size: ${p => p.$f}px;
  text-align: ${p => (p.$right ? 'right' : 'center')};
  letter-spacing: ${p => (p.$right ? '-0.015em' : '-0.04em')};
`;

const sharedApps: { icon: React.ReactNode; run?: string; wide?: boolean; hl?: string; badge?: boolean }[] = [
  { icon: <CopilotIcon s={20} /> }, { icon: <TaskViewIcon s={20} /> }, { icon: <FolderIcon s={20} />, run: '#8a8996' }, { icon: <EdgeIcon s={20} /> },
  { icon: <StoreIcon s={20} />, run: '#8a8996' }, { icon: <HexIcon s={20} /> }, { icon: <AsusIcon s={20} />, run: '#c42b2b', hl: '#f8dfe6' },
  { icon: <XboxIcon s={20} /> }, { icon: <ChromeIcon s={20} />, run: '#8a8996' }, { icon: <SettingsIcon s={20} />, run: '#8a8996' },
  { icon: <VisualStudioIcon s={20} />, run: '#8a8996' }, { icon: <NotepadIcon s={20} />, run: '#8a8996' },
  { icon: <WhiteboardIcon s={20} />, run: '#23838f', wide: true, hl: '#eceaf2' }, { icon: <TeamsLogo s={19} />, run: '#8a8996', badge: true },
];

function SharedTaskbar() {
  return (
    <InnerTaskbar>
      <EventWidget>
        <svg width="20" height="16" viewBox="0 0 20 16"><rect width="20" height="16" rx="2" fill="#1480b8" /><rect x="3" y="3" width="14" height="10" fill="#7fd0e4" /><path d="M6 11V8M10 11V5M14 11V7" stroke="#0f5f8c" strokeWidth="2" /></svg>
        <span>Top events<br />Event brief</span>
      </EventWidget>
      <Cell $w={37}><WindowsLogo s={20} /></Cell>
      <SearchPill $w={184.5} $h={26} $pad={9} $gap={8} $font={12} $art={9}>
        <Search s={13} c="#222" w={2.2} />Search<Art $gap={4}><AlarmIcon s={14} /><GiftIcon s={13} /></Art>
      </SearchPill>
      {sharedApps.map((a, i) => (
        <TaskCell key={i} $w={37.1} $hl={a.hl} $inset="2px 2px 2px 2px">
          {a.icon}
          {a.badge && <Badge $s={13} $bg="#23838f" $l={20} $t={4} $f={10}>1</Badge>}
          {a.run && <Running $w={a.wide ? 13 : 6} $h={2.5} $b={1.5} $c={a.run} />}
        </TaskCell>
      ))}
      <Cell $w={10} />
      <Cell $w={27.2}><ChevronUp s={11} c="#222" w={2.4} /></Cell>
      <Cell $w={27.2}><CloudIcon s={15} badge="#1160b7" mark="i" ink="#fff" /></Cell>
      <Cell $w={27.2}><Mic s={14} c="#3c6c78" w={1.9} /></Cell>
      <Stack $w={38} $lh={13.3} $f={11.3} $up={1}>ENG<br />IN</Stack>
      <Cell $w={25}><Wifi s={14} c="#222" w={1.9} /></Cell>
      <Cell $w={15}><Volume s={13} c="#222" w={1.8} /></Cell>
      <Cell $w={27}><Line s={14} c="#222" w={1.9}><rect x="1" y="6" width="19" height="12" rx="3" /><path d="M23 10.500v3" /><path d="M4 9v6" strokeWidth="3" /></Line></Cell>
      <Stack $w={60} $lh={13.3} $f={10.9} $right $up={1}>02:29<br />24-11-2023</Stack>
      <Cell $w={26}><svg width="13" height="14" viewBox="0 0 24 26"><path d="M12 1q8 1 8 9v6l3 5H1l3-5v-6q0-8 8-9z" fill="#1c1c1c" /><path d="M8 22q4 4 8 0z" fill="#1c1c1c" /><path d="M8 8h5l-5 6h5M16 3h5l-5 6h5" fill="none" stroke="#ddd" strokeWidth="1.5" /></svg></Cell>
    </InnerTaskbar>
  );
}

const Taskbar = styled.footer`
  height: 60px;
  flex: none;
  display: flex;
  align-items: center;
  border-top: 1px solid #b9b9b9;
  background: #eee;
`;
const Weather = styled.div`
  position: relative;
  width: 516px;
  padding: 0 0 3px 25px;
  display: flex;
  align-items: center;
  gap: 8px;
  line-height: 20px;
  color: #5b5b5b;
  letter-spacing: -0.01em;
`;
const Temperature = styled.div`
  color: #1f1f1f;
  letter-spacing: -0.04em;
`;
const QuickSettings = styled.div`
  width: 98px;
  height: 49px;
  flex: none;
  display: flex;
  align-items: center;
  justify-content: center;
  gap: 10px;
  border: 1px solid #e6e6e6;
  border-radius: 5px;
  background: #f7f7f7;
`;

function DesktopTaskbar() {
  return (
    <Taskbar>
      <Weather>
        <svg width="31" height="29" viewBox="0 0 31 29"><defs><linearGradient id="cld" x1="0" y1="0" x2="0" y2="1"><stop offset="0" stopColor="#e9f1ff" /><stop offset="1" stopColor="#8fb4ee" /></linearGradient></defs><path d="M12 0q-2 8-12 11 4 7 12 4l6-6V2z" fill="#f5a32b" /><path d="M7 28q-7 0-7-6 0-5 5.500-5.500Q7.500 10 14.500 10q7 0 9 6.500 6.500.5 6.500 6 0 5.500-6 5.500z" fill="url(#cld)" /></svg>
        <Badge $s={20} $bg="#c42b1c" $l={38.5} $t={-2} $f={13.5}>1</Badge>
        <div><Temperature>21°C</Temperature>Mostly cloudy</div>
      </Weather>
      <Cell $w={58}><WindowsLogo s={29} /></Cell>
      <SearchPill $w={273} $h={39} $pad={14} $gap={13} $font={17.5} $art={13}>
        <Search s={19} c="#222" w={2.3} />Search<Art $gap={5}><AlarmIcon s={20} /><GiftIcon s={20} /></Art>
      </SearchPill>
      <TaskCell $w={55}><CopilotIcon s={29} /></TaskCell>
      <TaskCell $w={55}><TaskViewIcon s={29} /></TaskCell>
      <TaskCell $w={55} $hl="#fafafa" $inset="5px 3px 6px 4px">
        <TeamsLogo s={29} /><Badge $s={20} $bg="#0078d4" $l={28} $t={8} $f={13.5}>2</Badge><Running $w={20} $h={4} $b={5} $c="#0078d4" />
      </TaskCell>
      <TaskCell $w={55}><FolderIcon s={30} /></TaskCell>
      <TaskCell $w={55}><StoreIcon s={29} /></TaskCell>
      <TaskCell $w={55}><AsusIcon s={30} /></TaskCell>
      <TaskCell $w={55}><EdgeIcon s={30} /></TaskCell>
      <TaskCell $w={55}><ChromeIcon s={30} /><Running $w={8} $h={4} $b={5} /></TaskCell>
      <TaskCell $w={55}><VisualStudioIcon s={30} /><Running $w={8} $h={4} $b={5} /></TaskCell>
      <TaskCell $w={55}><TerminalIcon s={30} /><Running $w={8} $h={4} $b={5} /></TaskCell>
      <Spacer />
      <Cell $w={40}><ChevronUp s={17} c="#222" w={2.3} /></Cell>
      <Cell $w={40}><CloudIcon s={21} badge="#fde300" mark="!" ink="#222" /></Cell>
      <Cell $w={40}><Mic s={20} c="#1c57a5" w={1.7} /></Cell>
      <Stack $w={56} $lh={20} $f={14.5} $up={1}>ENG<br />IN</Stack>
      <QuickSettings>
        <Wifi s={20} c="#222" w={1.6} /><Volume s={20} c="#222" w={1.5} dim="#b5b5b5" />
        <svg width="20" height="17" viewBox="0 0 20 17"><path d="M11 4.500h4q2 0 2 2v6.500q0 2-2 2H4" fill="none" stroke="#222" strokeWidth="1.3" /><path d="M18.800 8v4" stroke="#222" strokeWidth="2" /><path d="M6 0q4 3.500 3.500 7Q9 11 4 11l-2 3.500-1-.5 1.500-3Q0 9 .5 6 1.500 3 6 0z" fill="#1a1a1a" /></svg>
      </QuickSettings>
      <Stack $w={89} $lh={20} $f={15} $right $up={3}>02:29<br />24-11-2023</Stack>
      <Cell $w={38}><svg width="17" height="19" viewBox="0 0 17 19"><path d="M8.500 0Q15 .5 15 7v4.500L17 15H0l2-3.500V7Q2 .5 8.500 0z" fill="#0a3f94" /><path d="M5.500 16.500h6q-3 4-6 0z" fill="#0a3f94" /></svg></Cell>
      <Cell $w={16} />
    </Taskbar>
  );
}

/* ---------- chat ---------- */

const ChatPanel = styled.aside`
  position: relative;
  flex: 1;
  padding-left: 20px;
  display: flex;
  flex-direction: column;
  align-items: flex-start;
  border-left: 1px solid #d9d9d9;
  background: #fff;
`;
const CodeBubble = styled.div`
  width: 282px;
  height: 347px;
  padding: 0 0 10.500px 20px;
  display: flex;
  flex-direction: column;
  justify-content: flex-end;
  border-radius: 0 0 7px 7px;
  background: #f4f4f4;
  font-size: 17.500px;
  letter-spacing: -0.033em;
  word-spacing: 1.300px;
`;
const CodeLine = styled.div<{ $in?: number }>`
  height: 25px;
  flex: none;
  line-height: 25px;
  padding-left: ${p => p.$in ?? 0}px;
`;
const DayStamp = styled.div<{ $h: number; $up?: number }>`
  width: 342px;
  height: ${p => p.$h}px;
  line-height: ${p => p.$h - (p.$up ?? 0)}px;
  text-align: center;
  color: #616161;
  letter-spacing: -0.04em;
`;
const Sender = styled.div<{ $top?: number }>`
  height: 22px;
  margin-top: ${p => p.$top ?? 0}px;
  line-height: 18px;
  color: #616161;
`;
const Bubble = styled.div`
  width: 51px;
  height: 44px;
  padding-left: 20px;
  line-height: 43px;
  border-radius: 7px;
  background: #f4f4f4;
  font-size: 17.500px;
`;
const MineRow = styled.div`
  width: 348px;
  margin-top: 15px;
  display: flex;
  justify-content: flex-end;
  align-items: flex-end;
  gap: 4px;
`;
const MyBubble = styled.div`
  width: 48px;
  height: 45px;
  line-height: 44px;
  text-align: center;
  border-radius: 7px;
  background: #6f5cc8;
  color: #fff;
  font-size: 17.500px;
`;
const Seen = styled.span`
  padding-bottom: 2px;
`;
const LastRead = styled.div`
  width: 322px;
  height: 46px;
  padding-top: 3px;
  display: flex;
  align-items: center;
  justify-content: space-between;
  color: #5b5fc7;
  font-weight: 700;
  letter-spacing: -0.05em;
  &::before,
  &::after {
    content: '';
    width: 104px;
    height: 1px;
    margin-bottom: 1px;
    background: #5b5fc7;
  }
`;
const Attachment = styled.div`
  width: 277px;
  height: 95px;
  padding: 19px 20px;
  border-radius: 7px;
  background: #f4f4f4;
`;
const FileCard = styled.div`
  height: 60px;
  padding: 0 19px 0 17px;
  display: flex;
  align-items: center;
  border-radius: 7px;
  background: #fafafa;
  box-shadow: 0 0 2px rgba(0, 0, 0, 0.22), 0 1px 2px rgba(0, 0, 0, 0.12);
  font-size: 17.500px;
  font-weight: 500;
`;
const FileName = styled.span`
  flex: 1;
  margin-left: 12px;
`;
const Compose = styled.div`
  width: 359px;
  height: 53px;
  margin-top: 72px;
  padding-left: 15px;
  line-height: 51px;
  border: 1px solid #dadada;
  border-radius: 5px;
  font-size: 17.500px;
  letter-spacing: -0.02em;
  color: #616161;
`;
const Placeholder = styled.div`
  width: 87px;
  overflow: hidden;
`;
const ComposeTools = styled.div`
  width: 359px;
  height: 41px;
  display: flex;
`;
const Tooltip = styled.div`
  position: absolute;
  left: 123px;
  top: 809.500px;
  width: 223px;
  height: 79px;
  padding: 8px 0 0 11px;
  border: 1px solid #e4e4e4;
  border-radius: 5px;
  background: #f9f9f9;
  color: #1c1c1c;
  line-height: 20px;
`;

function Chat() {
  return (
    <ChatPanel>
      <CodeBubble>
        <CodeLine $in={38}>Console.WriteLine("Dob =</CodeLine>
        <CodeLine>" &amp; person1.getDob)</CodeLine>
        <CodeLine $in={38}>Console.WriteLine("Gender</CodeLine>
        <CodeLine>= " &amp; person1.getGender)</CodeLine>
        <CodeLine $in={38}>getObject()</CodeLine>
        <CodeLine $in={38}>GC.Collect()</CodeLine>
        <CodeLine />
        <CodeLine />
        <CodeLine $in={19}>End Sub</CodeLine>
        <CodeLine>End Module</CodeLine>
      </CodeBubble>
      <DayStamp $h={51}>Today 00:39</DayStamp>
      <Sender>Sandeep Raj</Sender>
      <Bubble>Hi</Bubble>
      <MineRow>
        <MyBubble>hy</MyBubble>
        <Seen><svg width="12" height="9" viewBox="0 0 12 9"><path d="M.5 5Q2 .8 6 .8T11.500 5" fill="none" stroke="#5b5fc7" /><circle cx="6" cy="5.5" r="2.8" fill="#5b5fc7" /></svg></Seen>
      </MineRow>
      <LastRead>Last read</LastRead>
      <DayStamp $h={30} $up={2}>Today 02:22</DayStamp>
      <Sender $top={9}>Sandeep Raj</Sender>
      <Attachment>
        <FileCard>
          <svg width="37" height="28" viewBox="0 0 37 28"><path d="M0 4h37v24H0z" fill="#ffd75e" /><path d="M0 2q0-2 2-2h12l5 4.500L14 9H0z" fill="#ffb900" /><path d="M0 26.500h37V28H0z" fill="#d9822b" /><path d="M0 16h3v4H0zM3 14h13v8H3z" fill="#c05a10" /><path d="M6.500 16.500h3v3h-3zM11 16.500h3v3h-3z" fill="#ffd75e" /><path d="M18 18h19" stroke="#c05a10" strokeWidth="4" strokeDasharray="2 1.700" /></svg>
          <FileName>test.zip</FileName>
          <Dots s={20} gap={7.5} r={1.8} />
        </FileCard>
      </Attachment>
      <Compose><Placeholder>Type a message</Placeholder></Compose>
      <ComposeTools>
        <Cell $w={40}><Line s={21} w={1.5}><path d="M1 18L7 2l5 12M3 13h7" /><path d="M21 8q3 1 1 4l-9 9-5 2 2-5 9-9q1-1 2-1z" /></Line></Cell>
        <Cell $w={41}><Line s={20} w={1.5}><rect x="2" y="2" width="20" height="20" rx="4" /><circle cx="16" cy="8" r="1.8" /><path d="M4 21l6.500-7q1.500-1.500 3 0L20 21" /></Line></Cell>
        <Cell $w={42}><Line s={22} w={1.4}><path d="M3 11l8-8q4-3 7 0t0 7L9 20q-2.500 2-5 0-2-2.500 0-5l9-9.500" /></Line></Cell>
        <Spacer />
        <Cell $w={41}><Line s={21} w={1.5}><path d="M1.500 1.500l22 10.500-22 10.500L5 12zM5 12h9" /></Line></Cell>
      </ComposeTools>
      <Tooltip>Battery status: 11% remaining<br />22min<br />Battery saver on</Tooltip>
    </ChatPanel>
  );
}

/* ---------- downloads flyout ---------- */

const Downloads = styled.div`
  position: absolute;
  left: 1470px;
  top: 108px;
  width: 451px;
  height: 114px;
  border-radius: 10px;
  border: 1px solid #dedede;
  background: #fff;
  box-shadow: 0 8px 18px rgba(0, 0, 0, 0.26), 0 1px 4px rgba(0, 0, 0, 0.25);
`;
const DownloadsHead = styled.div`
  height: 46px;
  padding: 0 13px 3px 19px;
  display: flex;
  align-items: center;
  border-bottom: 1px solid #e4e4e4;
  font-size: 17px;
  font-weight: 600;
  letter-spacing: -0.035em;
  color: #333;
`;
const DownloadItem = styled.div`
  padding: 11px 0 0 20px;
  display: flex;
  gap: 10px;
  font-size: 14.500px;
  line-height: 20px;
`;
const ZipArt = styled.svg`
  margin-top: 11px;
`;
const FileLink = styled.a`
  display: block;
  width: fit-content;
  height: 19px;
  line-height: 17px;
  margin-top: 1px;
  font-size: 13.200px;
  color: #0078d4;
  border-bottom: 1px solid #0078d4;
  letter-spacing: -0.055em;
`;

function DownloadsFlyout() {
  return (
    <Downloads>
      <DownloadsHead>
        Downloads<Spacer />
        <Cell $w={40}><Line s={21} c="#333" w={1.5}><path d="M2 6q0-3 3-3h3.500l3 3-3 3H2zM11.500 5.500H19q3 0 3 3V18q0 3-3 3H5q-3 0-3-3V7" /></Line></Cell>
        <Cell $w={40}><Search s={19} c="#333" w={1.5} /></Cell>
        <Cell $w={40}><Dots s={20} c="#333" gap={7.5} r={1.9} /></Cell>
        <Cell $w={40}><Cross s={18} c="#333" w={1.5} /></Cell>
      </DownloadsHead>
      <DownloadItem>
        <ZipArt width="19" height="15" viewBox="0 0 19 15"><path d="M0 2h19v13H0z" fill="#ffd65c" /><path d="M0 0h7l1.500 2L7 4H0z" fill="#f3ae18" /><path d="M0 9h19v2.500H0z" fill="#8f8f8f" /><path d="M1 9h4v5H1z" fill="#a8a8a8" /></ZipArt>
        <div>test.zip<FileLink>Open file</FileLink></div>
      </DownloadItem>
    </Downloads>
  );
}

export default function App() {
  return (
    <Screen>
      <GlobalStyle />
      <TitleBar>
        <TitleSide $w={200} $pad={14}><TeamsLogo s={21} /></TitleSide>
        <WindowTitle>Sandeep Raj</WindowTitle>
        <TitleSide $w={210}>
          <Cell $w={38}><Dots s={18} c="#666" gap={8} r={1.8} /></Cell>
          <Rule $h={25} $m="0 6px 0 0" $c="#dedede" />
          <Cell $w={55}><Minus s={15} c="#666" w={1.7} /></Cell>
          <Cell $w={55}><Restore s={16} c="#666" w={1.7} /></Cell>
          <Cell $w={55}><Cross s={17} c="#555" w={1.5} /></Cell>
        </TitleSide>
      </TitleBar>
      <CallControls />
      <Body>
        <Stage>
          <Participants>
            <Presenter>
              <PresenterAvatar $size={95} $bg="#ebd3e1" $fg="#5c1f45" $font={37}>SR</PresenterAvatar>
              Sandeep Raj
            </Presenter>
            <SelfTile><Avatar $size={71} $bg="#c5d2e8" $fg="#07265a" $font={27}>PR</Avatar></SelfTile>
          </Participants>
          <ShareFrame>
            <BoardTitle>
              Microsoft Whiteboard<Spacer />
              <Cell $w={37}><Minus s={9} c="#ddd" w={2.5} /></Cell>
              <Cell $w={42}><Restore s={10} c="#ddd" w={3} /></Cell>
              <Cell $w={35}><Cross s={10} c="#ddd" w={2.5} /></Cell>
            </BoardTitle>
            <BoardHeader>
              <Cell $w={17}><Line s={14} c="#333" w={1.7}><path d="M3 22V10l9-8 9 8v12h-5v-6q0-3-4-3t-4 3v6z" /></Line></Cell>
              <Rule $h={17} $m="0 0 0 11px" />
              <BoardName>Untitled whiteboard</BoardName>
              <Line s={10} c="#555" w={1.9}><path d="M2 7l10 11 10-11" /></Line>
              <Spacer />
              <Cell $w={42}><Line s={15} c="#333" w={1.7}><circle cx="12" cy="14" r="9" /><path d="M12 8v6M9 1.500h6M19 5l2 2" /></Line></Cell>
              <Rule $h={14} />
              <Cell $w={37}><Line s={14} c="#333" w={1.9}><path d="M10 3H6Q2 3 2 7v11q0 4 4 4h11q4 0 4-4v-2" /><path d="M15 2l8 7-8 7v-4q-6 0-9 4 1-9 9-10z" /></Line></Cell>
              <Cell $w={30}><Line s={15} c="#333" w={1.7}><circle cx="12" cy="12" r="3" /><path d="M9.500 2h5l.7 3.300 2.200 1.200 3.200-1 2.400 4.200-2.400 2.300 2.400 2.300-2.400 4.200-3.200-1-2.200 1.200-.7 3.300h-5l-.7-3.300-2.200-1.200-3.200 1L1 14.300 3.400 12 1 9.700l2.400-4.200 3.200 1 2.200-1.200z" /></Line></Cell>
            </BoardHeader>
            <Whiteboard />
            <SharedTaskbar />
          </ShareFrame>
          <NameTag>Sandeep Raj</NameTag>
          <ZoomTag>
            <svg width="16" height="17" viewBox="0 0 16 17"><path d="M0 8h16" stroke="#ccc" strokeWidth="1.5" /></svg>
            <svg width="17" height="17" viewBox="0 0 17 17"><path d="M0 8.500h17M8.500 0v17" stroke="#eee" strokeWidth="1.2" /></svg>
          </ZoomTag>
        </Stage>
        <Chat />
      </Body>
      <DesktopTaskbar />
      <DownloadsFlyout />
    </Screen>
  );
}
